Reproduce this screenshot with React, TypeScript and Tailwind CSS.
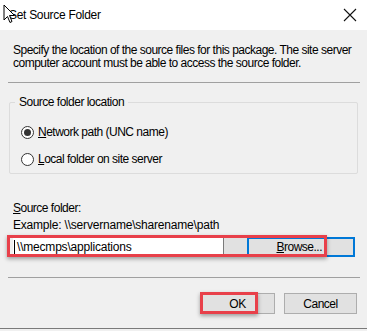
import React from "react";

function Radio({ checked }: { checked?: boolean }) {
  return (
    <span className="w-[13px] h-[13px] rounded-full border border-[#333333] bg-white flex items-center justify-center shrink-0">
      {checked && <span className="w-[7px] h-[7px] rounded-full bg-[#333333]" />}
    </span>
  );
}

export default function App() {
  return (
    <div
      className="w-[367px] h-[331px] bg-white relative overflow-hidden flex flex-col text-[#000000]"
      style={{ fontFamily: '"Liberation Sans", Arial, sans-serif' }}
    >
      {/* title bar */}
      <div className="h-[30px] flex items-center justify-between pl-[9px] pr-[6px] shrink-0">
        <span className="text-[12px] leading-none tracking-[-0.3px]">Set Source Folder</span>
        <svg width="14" height="14" viewBox="0 0 14 14" className="mr-[4px] mb-[1px]">
          <path d="M1 1 L13 13 M13 1 L1 13" stroke="#111" strokeWidth="1.1" fill="none" />
        </svg>
      </div>

      {/* body */}
      <div className="flex-1 bg-[#f0f0f0] flex flex-col text-[12px] leading-[14px] tracking-[-0.5px]">
        <p className="pt-[14px] pl-[13px] pr-[8px] leading-[13px]">
          Specify the location of the source files for this package. The site server computer account must be able to access the source folder.
        </p>

        <div className="mt-[12px] ml-[8px] mr-[7px] h-px bg-[#a0a0a0]" />

        <div className="mt-[19px] ml-[9px] mr-[9px] h-[72px] border border-[#dcdcdc] rounded-[2px] flex flex-col">
          <span className="-mt-[7px] ml-[5px] px-[4px] w-fit bg-[#f0f0f0] leading-[13px]">Source folder location</span>
          <div className="flex flex-col gap-[13px] pl-[11px] mt-[16px]">
            <label className="flex items-center gap-[4px]">
              <Radio checked />
              <span><span className="underline">N</span>etwork path (UNC name)</span>
            </label>
            <label className="flex items-center gap-[4px]">
              <Radio />
              <span><span className="underline">L</span>ocal folder on site server</span>
            </label>
          </div>
        </div>

        <div className="mt-[28px] pl-[13px] leading-[13px]">
          <span className="underline">S</span>ource folder:
        </div>
        <div className="mt-[4px] pl-[13px] leading-[13px] tracking-[-0.2px]">Example: \\servername\sharename\path</div>

        <div className="mt-[5px] ml-[13px] flex h-[20px]">
          <div className="w-[211px] bg-white border-r border-[#7a7a7a] flex items-center pl-[1px] tracking-[-0.2px]">
            <span className="w-px h-[14px] bg-black mr-[2px]" />
            \\mecmps\applications
          </div>
          <div className="w-[23px] bg-[#e1e1e1]" />
          <div className="w-[108px] border-2 border-[#0078d7] bg-[#e1e1e1] flex items-center justify-end pr-[31px]">
            <span><span className="underline">B</span>rowse...</span>
          </div>
        </div>

        <div className="mt-[20px] ml-[8px] mr-[7px] h-px bg-[#a0a0a0]" />

        <div className="mt-[15px] flex justify-end gap-[9px] pr-[10px]">
          <button className="w-[75px] h-[21px] bg-[#e1e1e1] border border-[#adadad] flex items-center justify-center">
            OK
          </button>
          <button className="w-[73px] h-[21px] bg-[#e1e1e1] border border-[#adadad] flex items-center justify-center">
            Cancel
          </button>
        </div>

        <div className="mt-auto mb-[2px] h-px bg-[#7a7a7a]" />
      </div>

      {/* red highlight boxes */}
      <div className="absolute left-[7px] top-[235px] w-[320px] h-[22px] border-[3px] border-[#e8404a] shadow-[0_2px_4px_rgba(0,0,0,0.35)]" />
      <div className="absolute left-[200px] top-[292px] w-[58px] h-[22px] border-[3px] border-[#e8404a] shadow-[0_2px_4px_rgba(0,0,0,0.35)]" />

      {/* mouse cursor */}
      <svg className="absolute left-[3px] top-[4px]" width="14" height="20" viewBox="0 0 14 20">
        <path d="M1 1 L1 16 L4.5 12.5 L7 18.5 L9 17.5 L6.5 11.5 L11.5 11.5 Z" fill="#fff" stroke="#000" strokeWidth="1" strokeLinejoin="round" />
      </svg>
    </div>
  );
}
